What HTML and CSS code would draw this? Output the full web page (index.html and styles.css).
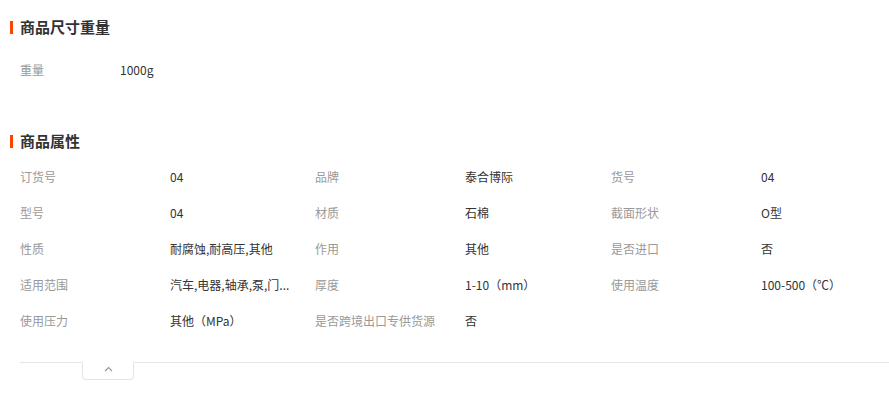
FILE: index.html
```html
<!DOCTYPE html>
<html lang="zh-CN">
<head>
<meta charset="utf-8">
<link rel="stylesheet" href="styles.css">
</head>
<body>
<div class="page">
  <section class="sec sec-size">
    <h2 class="sec-title">商品尺寸重量</h2>
    <div class="grid grid-size">
      <span class="lbl">重量</span><span class="val">1000g</span>
    </div>
  </section>
  <section class="sec sec-attr">
    <h2 class="sec-title">商品属性</h2>
    <div class="grid grid-attr">
      <span class="lbl">订货号</span><span class="val">04</span>
      <span class="lbl">品牌</span><span class="val">泰合博际</span>
      <span class="lbl">货号</span><span class="val">04</span>

      <span class="lbl">型号</span><span class="val">04</span>
      <span class="lbl">材质</span><span class="val">石棉</span>
      <span class="lbl">截面形状</span><span class="val">O型</span>

      <span class="lbl">性质</span><span class="val">耐腐蚀,耐高压,其他</span>
      <span class="lbl">作用</span><span class="val">其他</span>
      <span class="lbl">是否进口</span><span class="val">否</span>

      <span class="lbl">适用范围</span><span class="val" title="汽车,电器,轴承,泵,门阀,管道">汽车,电器,轴承,泵,门...</span>
      <span class="lbl">厚度</span><span class="val">1-10（mm）</span>
      <span class="lbl">使用温度</span><span class="val">100-500（℃）</span>

      <span class="lbl">使用压力</span><span class="val">其他（MPa）</span>
      <span class="lbl">是否跨境出口专供货源</span><span class="val">否</span>
    </div>
  </section>
  <div class="fold">
    <button class="fold-btn" type="button" aria-label="收起">
      <svg width="9" height="6" viewBox="0 0 9 6"><path d="M1 5 L4.5 1.5 L8 5" fill="none" stroke="#999" stroke-width="1.2"/></svg>
    </button>
  </div>
</div>
</body>
</html>
```
FILE: styles.css
```css
* { box-sizing: border-box; }
html, body { margin: 0; padding: 0; background: #fff; }
body {
  font-family: "Noto Sans CJK SC", "Noto Sans", sans-serif;
  font-size: 12px;
  color: #333;
}
.page { padding: 17px 0 0 10px; }
.sec-title {
  display: flex;
  align-items: center;
  gap: 7px;
  margin: 0;
  height: 20px;
  font-size: 15px;
  font-weight: 700;
  color: #333;
  line-height: 20px;
}
.sec-title::before {
  content: "";
  width: 3px;
  height: 13px;
  background: #ff4400;
}
.grid {
  display: grid;
  grid-template-columns: 150px 145px 150px 146px 150px 1fr;
  grid-auto-rows: 36px;
  align-items: center;
  padding-left: 10px;
}
.grid-size {
  margin-top: 15px;
  grid-template-columns: 100px 1fr;
}
.sec-attr { margin-top: 43px; }
.grid-attr { margin-top: 8px; }
.lbl { color: #999; white-space: nowrap; line-height: 16px; }
.val {
  color: #333;
  line-height: 16px;
  white-space: nowrap;
}
.fold {
  margin: 23px 0 0 10px;
  border-top: 1px solid #e5e5e5;
  height: 40px;
}
.fold-btn {
  display: flex;
  align-items: center;
  justify-content: center;
  margin: -1px 0 0 62px;
  width: 52px;
  height: 18px;
  padding: 0 0 4px;
  background: #fff;
  border: 1px solid #e5e5e5;
  border-top-color: #fff;
  border-radius: 0 0 4px 4px;
}
```
